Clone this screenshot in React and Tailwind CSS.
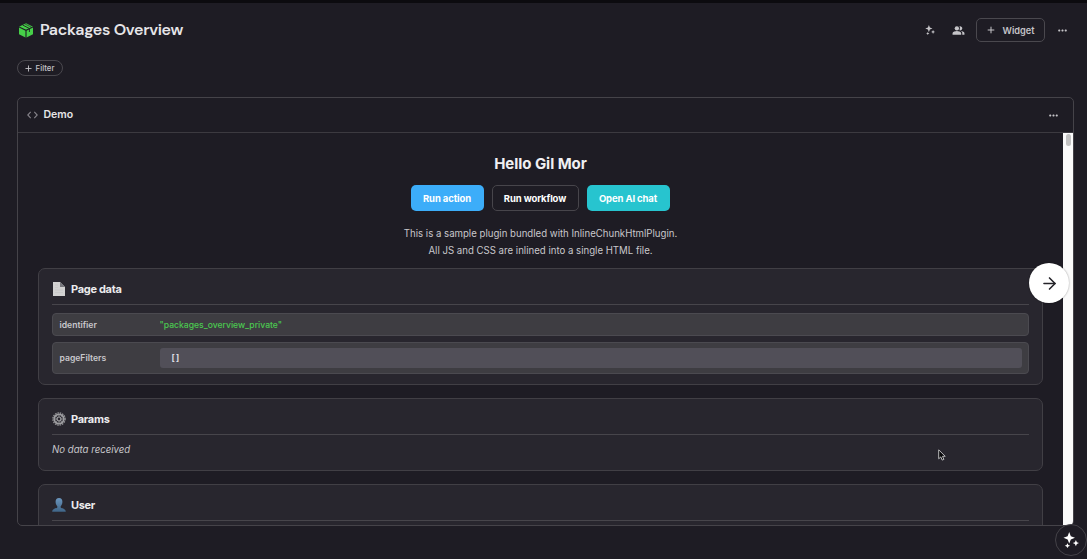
import { Plus, ArrowRight } from "lucide-react";
import { MdPeopleAlt, MdMoreHoriz } from "react-icons/md";

const pageData = [
  { key: "identifier", value: '"packages_overview_private"' },
  { key: "pageFilters", value: [] },
];

function PackageIcon() {
  return (
    <svg width="14" height="15" viewBox="0 0 14 15">
      <path d="M7 .2 14 3.7V11.2L7 14.8 0 11.2V3.7Z" fill="#46cf48" />
      <path d="M0 3.9 7 7.3 14 3.9M7 7.3V15" fill="none" stroke="#1e1c24" strokeWidth="1.1" />
      <path d="M3.6 2 10.4 5.5V9" fill="none" stroke="#1e1c24" strokeWidth=".9" />
      <path d="M5.8 .9 12.4 4.2" fill="none" stroke="#1e1c24" strokeWidth=".6" />
    </svg>
  );
}

function Sparkles({ size, className }) {
  return (
    <svg width={size} height={size} viewBox="0 0 18 18" fill="currentColor" className={className}>
      <path d="M7 0 8.8 4.7 13.5 6.5 8.8 8.3 7 13 5.2 8.3 .5 6.5 5.2 4.7Z" />
      <path d="M14.5 9 15.6 11.4 18 12.5 15.6 13.6 14.5 16 13.4 13.6 11 12.5 13.4 11.4Z" />
      <path d="M5 12.6 6 14.6 8 15.4 6 16.2 5 18 4 16.2 2 15.4 4 14.6Z" />
    </svg>
  );
}

function CodeIcon() {
  return (
    <svg width="11" height="8" viewBox="0 0 11 8" fill="none" stroke="#85838a" strokeWidth="1.1">
      <path d="M3.7 .9 .8 4 3.7 7.1M7.3 .9 10.2 4 7.3 7.1" />
    </svg>
  );
}

function PageIcon() {
  return (
    <svg width="14" height="14" viewBox="0 0 14 14">
      <path d="M1 0H8L13 5V14H1Z" fill="#d2d2d2" />
      <path d="M8 0 13 5H8Z" fill="#77777c" />
      <path d="M3 3H6M3 5.5H6M3 8H11M3 10.5H11" stroke="#c4c4c4" strokeWidth=".6" />
    </svg>
  );
}

function GearIcon() {
  return (
    <svg width="14" height="14" viewBox="0 0 14 14" fill="none">
      <circle cx="7" cy="7" r="6.1" stroke="#98989b" strokeWidth="1.3" strokeDasharray="1.5 .9" />
      <circle cx="7" cy="7" r="4.7" stroke="#a0a0a3" strokeWidth="1.8" />
      <circle cx="7" cy="7" r="2" stroke="#aaaaac" strokeWidth="1.2" />
      <path d="M7 2.5V5M7 9V11.5M2.5 7H5M9 7H11.5M3.8 3.8 5.6 5.6M8.4 8.4 10.2 10.2M10.2 3.8 8.4 5.6M5.6 8.4 3.8 10.2" stroke="#88888b" strokeWidth=".8" />
    </svg>
  );
}

function UserIcon() {
  return (
    <svg width="14" height="14" viewBox="0 0 14 14">
      <defs>
        <linearGradient id="bust" x1="0" y1="0" x2="0" y2="1">
          <stop offset="0" stopColor="#6b95bd" />
          <stop offset="1" stopColor="#3f6587" />
        </linearGradient>
      </defs>
      <path d="M7 0C9.4 0 10.5 1.7 10.4 4 10.3 6 9.5 7.4 8.7 8.2V9.6C9 10.5 13.8 10.4 13.8 13.8H.2C.2 10.4 5 10.5 5.3 9.6V8.2C4.5 7.4 3.7 6 3.6 4 3.5 1.7 4.6 0 7 0Z" fill="url(#bust)" />
    </svg>
  );
}

function Card({ icon, title, className, children }) {
  return (
    <section className={`shrink-0 rounded-[7px] border border-[#413f45] bg-[#28262e] px-[13px] ${className}`}>
      <div className="flex h-[36px] items-center gap-[5px] border-b border-[#47454b] pt-[5px]">
        {icon}
        <h2 className="text-[11px] font-bold tracking-[-0.3px] text-[#ececee]">{title}</h2>
      </div>
      {children}
    </section>
  );
}

function DataRow({ name, value }) {
  const nested = Array.isArray(value);
  return (
    <div className={`flex items-center rounded-[4px] border border-[#4b4a50] bg-[#3e3d42] pl-[6.5px] pr-[6px] ${nested ? "h-[32px]" : "h-[23px]"}`}>
      <span className="w-[100px] shrink-0 pt-[1px] text-[8.6px] font-semibold text-[#c9c8cc]">{name}</span>
      {nested ? (
        <div className="flex h-[20px] flex-1 items-center rounded-[3px] bg-[#514f58] pl-[12px] text-[8.5px] font-bold tracking-[-0.4px] text-[#dddce0]">
          [ ]
        </div>
      ) : (
        <span className="pt-[1px] text-[8.6px] font-medium text-[#4bc950]">{value}</span>
      )}
    </div>
  );
}

export default function App() {
  return (
    <div className="relative flex h-[559px] w-[1087px] flex-col overflow-hidden border-t-[3px] border-[#0c0b0f] bg-[#1e1c24] font-['Inter',sans-serif] text-[#e6e5e8]">
      {/* Page header */}
      <header className="mt-[15px] flex h-[24px] shrink-0 items-center justify-between pl-[19px] pr-[19px]">
        <div className="flex items-center gap-[7px]">
          <PackageIcon />
          <h1 className="font-['DM_Sans','Inter',sans-serif] text-[16px] font-semibold tracking-[-0.32px] whitespace-nowrap">Packages Overview</h1>
        </div>
        <div className="flex items-center text-[#c5c4c8]">
          <Sparkles size={10} className="mr-[17px]" />
          <MdPeopleAlt size={13} className="mr-[11px]" />
          <button className="flex h-[24px] w-[69px] items-center justify-center gap-[7px] rounded-[5px] border border-[#4a484e] pr-[1px] text-[9.2px] font-semibold">
            <Plus size={10} strokeWidth={2.4} />
            <span className="pt-[1px]">Widget</span>
          </button>
          <MdMoreHoriz size={13} className="ml-[11px] -mr-[1px]" />
        </div>
      </header>

      <div className="mt-[18px] flex shrink-0 pl-[17px]">
        <button className="flex h-[16px] w-[46px] items-center justify-center gap-[3px] rounded-full border border-[#4a484e] pr-[2px] text-[7.8px] font-medium text-[#c5c4c8]">
          <Plus size={9} strokeWidth={2.4} />
          <span className="pt-[1px]">Filter</span>
        </button>
      </div>

      {/* Widget */}
      <main className="mt-[21px] ml-[17px] flex h-[429px] w-[1057px] shrink-0 flex-col overflow-hidden rounded-[5px] border border-[#454349]">
        <div className="flex h-[35px] shrink-0 items-center border-b border-[#3c3a40] pl-[8.5px] pr-[13px]">
          <CodeIcon />
          <h2 className="ml-[6px] text-[10.5px] font-semibold">Demo</h2>
          <MdMoreHoriz size={13} className="ml-auto text-[#c5c4c8]" />
        </div>

        <div className="flex min-h-0 flex-1">
          <div className="flex min-w-0 flex-1 flex-col px-[20px]">
            <h1 className="mt-[20px] text-center text-[15px] leading-[22px] font-bold tracking-[-0.05px] text-[#f0eff2]">Hello Gil Mor</h1>
            <div className="mt-[10px] flex justify-center gap-[8px] pr-[1px] text-[9.5px] font-bold tracking-[-0.12px] text-white">
              <button className="h-[26px] w-[73px] rounded-[5px] bg-[#3cadf9] pt-[2px]">Run action</button>
              <button className="h-[26px] w-[87px] rounded-[5px] border border-[#47454b] pt-[2px]">Run workflow</button>
              <button className="h-[26px] w-[83px] rounded-[5px] bg-[#27c4cf] pt-[2px]">Open AI chat</button>
            </div>
            <p className="mt-[14px] shrink-0 text-center text-[9.65px] leading-[17px] text-[#c9c8cc]">
              This is a sample plugin bundled with InlineChunkHtmlPlugin.
              <br />
              All JS and CSS are inlined into a single HTML file.
            </p>

            <Card icon={<PageIcon />} title="Page data" className="mt-[9px] h-[117px]">
              <div className="mt-[8px] flex flex-col gap-[6px]">
                {pageData.map((row) => (
                  <DataRow key={row.key} name={row.key} value={row.value} />
                ))}
              </div>
            </Card>

            <Card icon={<GearIcon />} title="Params" className="mt-[13px] h-[73px]">
              <p className="mt-[7px] text-[9.65px] leading-[15px] text-[#c9c8cc] italic">No data received</p>
            </Card>

            <Card icon={<UserIcon />} title="User" className="mt-[13px] h-[90px]" />
          </div>

          {/* Scrollbar */}
          <div className="flex w-[10px] shrink-0 justify-center bg-[#fafafa] pt-[1px]">
            <div className="h-[12px] w-[5px] rounded-full bg-[#c2c2c2]" />
          </div>
        </div>
      </main>

      {/* Next button */}
      <button className="absolute top-[260px] left-[1029px] flex size-[40px] items-center justify-center rounded-full bg-white text-[#242329] shadow-[0_0_2px_rgba(0,0,0,0.4)]">
        <ArrowRight size={19} strokeWidth={2} />
      </button>

      {/* AI assistant */}
      <button className="absolute top-[521px] left-[1055px] flex size-[32px] items-center justify-center rounded-full border border-[#444248] bg-[#1e1c24] text-white">
        <Sparkles size={16} />
      </button>

      {/* Pointer */}
      <svg className="absolute top-[446px] left-[938px]" width="8" height="12" viewBox="0 0 8 12">
        <path d="M.7 .8V9.8L2.8 7.9 4.2 11.1 5.9 10.4 4.5 7.3H7.2Z" fill="#08080a" stroke="#c9c9cb" strokeWidth=".9" />
      </svg>
    </div>
  );
}
